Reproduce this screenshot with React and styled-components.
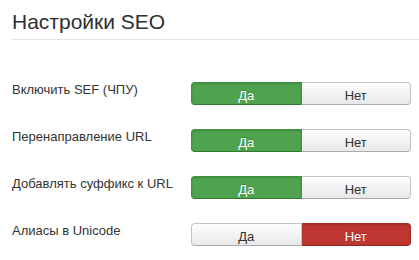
import React from 'react';
import styled, { createGlobalStyle } from 'styled-components';

const GlobalStyle = createGlobalStyle`
  body {
    margin: 0;
    background: #fff;
    font-family: "Liberation Sans", Arial, sans-serif;
    color: #333;
  }
`;

const Page = styled.div`
  width: 419px;
  height: 260px;
  overflow: hidden;
`;

const Header = styled.div`
  margin-left: 11px;
  padding: 10px 0 5px 1px;
  border-bottom: 1px solid #e5e5e5;
`;

const Title = styled.h2`
  margin: 0;
  font-size: 21px;
  line-height: 24px;
  font-weight: normal;
  color: #2f2f2f;
`;

const Form = styled.div`
  padding: 42px 0 0 12px;
`;

const Row = styled.div`
  display: grid;
  grid-template-columns: 179px 220px;
  align-items: start;
  height: 47px;
`;

const Label = styled.div`
  font-size: 13px;
  line-height: 18px;
  margin-top: -1px;
  color: #333;
`;

const Group = styled.div`
  display: flex;
  height: 23px;
`;

const colors = {
  yes: { bg: '#4fa34f', border: '#3e8f3e', bottom: '#327a32', text: '#fff' },
  no: { bg: '#bd3630', border: '#a52d28', bottom: '#8f2521', text: '#fff' },
};

const Btn = styled.div`
  flex: 1;
  box-sizing: border-box;
  height: 23px;
  padding-top: 5px;
  font-size: 13px;
  line-height: 16px;
  text-align: center;
  border: 1px solid #c4c4c4;
  border-bottom-color: #ababab;
  background: linear-gradient(#fefefe, #e8e8e8);
  color: #333;
  &:first-child {
    border-radius: 4px 0 0 4px;
  }
  &:last-child {
    border-radius: 0 4px 4px 0;
    border-left: 0;
  }
  ${({ $active }) =>
    $active &&
    `
    background: ${colors[$active].bg};
    border-color: ${colors[$active].border};
    border-bottom-color: ${colors[$active].bottom};
    color: ${colors[$active].text};
    text-shadow: 0 -1px 0 rgba(0,0,0,0.2);
    box-shadow: inset 0 1px 2px rgba(0,0,0,0.15);
  `}
`;

const settings = [
  { label: 'Включить SEF (ЧПУ)', value: true },
  { label: 'Перенаправление URL', value: true },
  { label: 'Добавлять суффикс к URL', value: true },
  { label: 'Алиасы в Unicode', value: false },
];

export default function App() {
  return (
    <Page>
      <GlobalStyle />
      <Header>
        <Title>Настройки SEO</Title>
      </Header>
      <Form>
        {settings.map((s) => (
          <Row key={s.label}>
            <Label>{s.label}</Label>
            <Group>
              <Btn $active={s.value ? 'yes' : null}>Да</Btn>
              <Btn $active={s.value ? null : 'no'}>Нет</Btn>
            </Group>
          </Row>
        ))}
      </Form>
    </Page>
  );
}
